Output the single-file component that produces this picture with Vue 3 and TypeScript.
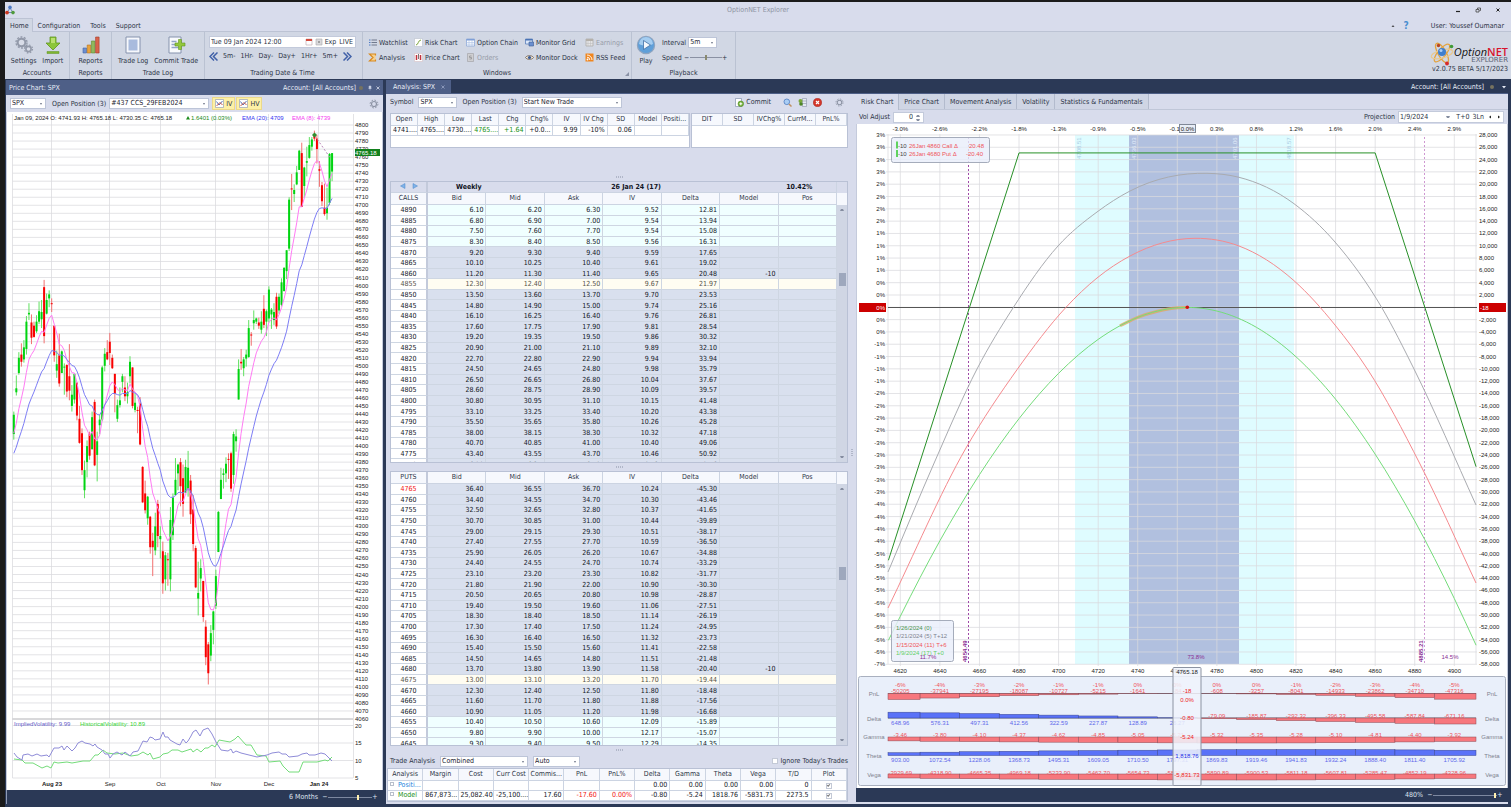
<script setup lang="ts">
import { ref } from 'vue'

type Quote = [number, string, string, string, string, string, string?]
type Pt = [number, number]

const riskTabs = ['Risk Chart', 'Price Chart', 'Movement Analysis', 'Volatility', 'Statistics & Fundamentals']
const activeTab = ref('Risk Chart')
const menus = ['Home', 'Configuration', 'Tools', 'Support']
const steps = ['5m-', '1Hr-', 'Day-', 'Day+', '1Hr+', '5m+']
const dateText = ref('Tue 09 Jan 2024 12:00')
const volAdjust = ref('0')
const projection = ref('1/9/2024')
const speed = ref(50)
const zoomLeft = ref(70)
const zoomRight = ref(98)
const ignoreTrades = ref(false)
const plotPosition = ref(true)
const plotModel = ref(true)

const quoteHead = ['Open', 'High', 'Low', 'Last', 'Chg', 'Chg%', 'IV', 'IV Chg', 'SD', 'Model', 'Positi...']
const quoteRow = ['4741....', '4765....', '4730....', '4765....', '+1.64', '+0.0...', '9.99', '-10%', '0.06', '', '']
const tradeHead = ['DIT', 'SD', 'IVChg%', 'CurrM...', 'PnL%']
const chainHead = ['Bid', 'Mid', 'Ask', 'IV', 'Delta', 'Model', 'Pos']

const calls: Quote[] = [
  [4890, '6.10', '6.20', '6.30', '9.52', '12.81'],
  [4885, '6.80', '6.90', '7.00', '9.54', '13.94'],
  [4880, '7.50', '7.60', '7.70', '9.54', '15.08'],
  [4875, '8.30', '8.40', '8.50', '9.56', '16.31'],
  [4870, '9.20', '9.30', '9.40', '9.59', '17.65'],
  [4865, '10.10', '10.25', '10.40', '9.61', '19.02'],
  [4860, '11.20', '11.30', '11.40', '9.65', '20.48', '-10'],
  [4855, '12.30', '12.40', '12.50', '9.67', '21.97'],
  [4850, '13.50', '13.60', '13.70', '9.70', '23.53'],
  [4845, '14.80', '14.90', '15.00', '9.74', '25.16'],
  [4840, '16.10', '16.25', '16.40', '9.76', '26.81'],
  [4835, '17.60', '17.75', '17.90', '9.81', '28.54'],
  [4830, '19.20', '19.35', '19.50', '9.86', '30.32'],
  [4825, '20.90', '21.00', '21.10', '9.89', '32.10'],
  [4820, '22.70', '22.80', '22.90', '9.94', '33.94'],
  [4815, '24.50', '24.65', '24.80', '9.98', '35.79'],
  [4810, '26.50', '26.65', '26.80', '10.04', '37.67'],
  [4805, '28.60', '28.75', '28.90', '10.09', '39.57'],
  [4800, '30.80', '30.95', '31.10', '10.15', '41.48'],
  [4795, '33.10', '33.25', '33.40', '10.20', '43.38'],
  [4790, '35.50', '35.65', '35.80', '10.26', '45.28'],
  [4785, '38.00', '38.15', '38.30', '10.32', '47.18'],
  [4780, '40.70', '40.85', '41.00', '10.40', '49.06'],
  [4775, '43.40', '43.55', '43.70', '10.46', '50.92'],
  [4770, '46.20', '46.35', '46.50', '10.53', '52.76'],
]
const puts: Quote[] = [
  [4765, '36.40', '36.55', '36.70', '10.24', '-45.30'],
  [4760, '34.40', '34.55', '34.70', '10.30', '-43.46'],
  [4755, '32.50', '32.65', '32.80', '10.37', '-41.65'],
  [4750, '30.70', '30.85', '31.00', '10.44', '-39.89'],
  [4745, '29.00', '29.15', '29.30', '10.51', '-38.17'],
  [4740, '27.40', '27.55', '27.70', '10.59', '-36.50'],
  [4735, '25.90', '26.05', '26.20', '10.67', '-34.88'],
  [4730, '24.40', '24.55', '24.70', '10.74', '-33.29'],
  [4725, '23.10', '23.20', '23.30', '10.82', '-31.77'],
  [4720, '21.80', '21.90', '22.00', '10.90', '-30.30'],
  [4715, '20.50', '20.65', '20.80', '10.98', '-28.87'],
  [4710, '19.40', '19.50', '19.60', '11.06', '-27.51'],
  [4705, '18.30', '18.40', '18.50', '11.14', '-26.19'],
  [4700, '17.30', '17.40', '17.50', '11.24', '-24.95'],
  [4695, '16.30', '16.40', '16.50', '11.32', '-23.73'],
  [4690, '15.40', '15.50', '15.60', '11.41', '-22.58'],
  [4685, '14.50', '14.65', '14.80', '11.51', '-21.48'],
  [4680, '13.70', '13.80', '13.90', '11.58', '-20.40', '-10'],
  [4675, '13.00', '13.10', '13.20', '11.70', '-19.44'],
  [4670, '12.30', '12.40', '12.50', '11.80', '-18.48'],
  [4665, '11.60', '11.70', '11.80', '11.88', '-17.56'],
  [4660, '10.90', '11.05', '11.20', '11.98', '-16.68'],
  [4655, '10.40', '10.50', '10.60', '12.09', '-15.89'],
  [4650, '9.80', '9.90', '10.00', '12.17', '-15.07'],
  [4645, '9.30', '9.40', '9.50', '12.29', '-14.35'],
]
const rowTone = (strike: number) =>
  strike === 4855 || strike === 4675 ? 'cream' : strike > 4870 || strike < 4660 ? 'cyan' : 'blue'

const analysisHead = ['Analysis', 'Margin', 'Cost', 'Curr Cost', 'Commis...', 'PnL', 'PnL%', 'Delta', 'Gamma', 'Theta', 'Vega', 'T/D', 'Plot']
const positionRow = ['', '', '', '', '', '', '0.00', '0.00', '0.00', '0.00', '0']
const modelRow = ['867,873...', '25,082.40', '-25,100....', '17.60', '-17.60', '0.00%', '-0.80', '-5.24', '1818.76', '-5831.73', '2273.5']

/* ---------- price chart ---------- */
const bars: number[][] = [
  [4415, 4443, 4408, 4439], [4467, 4488, 4463, 4472], [4491, 4517, 4489, 4510], [4514, 4528, 4499, 4505],
  [4508, 4532, 4504, 4523], [4521, 4562, 4514, 4555], [4564, 4578, 4557, 4566], [4554, 4564, 4527, 4535],
  [4550, 4555, 4535, 4536], [4543, 4563, 4541, 4555], [4555, 4580, 4552, 4568], [4558, 4582, 4547, 4567],
  [4598, 4607, 4528, 4537], [4565, 4590, 4564, 4582], [4584, 4594, 4573, 4589],
  [4578, 4584, 4567, 4577], [4550, 4550, 4505, 4513], [4494, 4519, 4485, 4502], [4513, 4540, 4474, 4478],
  [4491, 4519, 4491, 4518], [4498, 4503, 4464, 4499], [4501, 4502, 4461, 4468], [4487, 4527, 4457, 4469],
  [4450, 4476, 4443, 4464], [4458, 4490, 4453, 4490], [4479, 4479, 4432, 4438], [4434, 4450, 4403, 4404],
  [4416, 4422, 4364, 4370], [4345, 4382, 4335, 4370], [4380, 4407, 4361, 4400], [4415, 4418, 4383, 4388],
  [4396, 4443, 4396, 4436], [4455, 4458, 4375, 4376], [4389, 4418, 4356, 4406], [4426, 4439, 4415, 4433],
  [4433, 4500, 4431, 4498], [4500, 4522, 4493, 4515], [4517, 4532, 4507, 4508],
  [4530, 4541, 4501, 4516], [4510, 4514, 4496, 4497], [4490, 4490, 4442, 4465], [4434, 4458, 4430, 4451],
  [4451, 4473, 4448, 4457], [4480, 4490, 4467, 4487], [4473, 4487, 4456, 4462], [4462, 4479, 4453, 4467],
  [4487, 4512, 4478, 4505], [4498, 4498, 4447, 4450], [4445, 4466, 4442, 4454], [4445, 4449, 4416, 4444],
  [4453, 4461, 4401, 4402], [4374, 4375, 4329, 4330], [4341, 4357, 4316, 4320], [4310, 4338, 4302, 4337],
  [4312, 4313, 4266, 4274], [4282, 4292, 4238, 4274], [4270, 4317, 4264, 4300], [4328, 4333, 4274, 4288],
  [4284, 4300, 4260, 4288], [4269, 4281, 4216, 4229], [4234, 4268, 4220, 4264], [4259, 4267, 4226, 4258],
  [4234, 4324, 4219, 4308], [4289, 4341, 4283, 4336], [4339, 4385, 4339, 4358], [4366, 4378, 4345, 4377],
  [4380, 4385, 4325, 4350], [4360, 4377, 4312, 4328], [4342, 4383, 4342, 4374], [4345, 4394, 4337, 4373],
  [4357, 4364, 4303, 4315], [4321, 4339, 4269, 4278], [4273, 4276, 4223, 4224], [4210, 4256, 4189, 4217],
  [4235, 4259, 4219, 4248], [4232, 4232, 4181, 4187], [4175, 4183, 4127, 4137], [4153, 4156, 4103, 4117],
  [4139, 4177, 4132, 4167], [4171, 4195, 4153, 4194],
  [4201, 4246, 4197, 4238], [4268, 4319, 4268, 4318], [4334, 4373, 4334, 4358], [4364, 4372, 4347, 4366],
  [4366, 4386, 4355, 4378], [4384, 4391, 4359, 4383], [4391, 4393, 4343, 4347], [4364, 4418, 4353, 4415],
  [4406, 4421, 4393, 4412], [4458, 4508, 4458, 4496], [4505, 4521, 4495, 4503], [4497, 4511, 4487, 4508],
  [4509, 4520, 4499, 4514], [4511, 4557, 4510, 4547], [4539, 4542, 4525, 4538], [4553, 4569, 4545, 4557],
  [4555, 4560, 4552, 4559], [4554, 4560, 4546, 4550], [4545, 4568, 4540, 4555], [4571, 4588, 4547, 4551],
  [4555, 4570, 4537, 4568],
  [4559, 4599, 4554, 4595], [4564, 4572, 4546, 4570], [4557, 4578, 4551, 4567], [4586, 4591, 4546, 4549],
  [4569, 4590, 4565, 4586], [4576, 4609, 4574, 4604], [4593, 4623, 4593, 4622], [4618, 4644, 4608, 4644],
  [4646, 4710, 4643, 4707], [4721, 4739, 4694, 4720], [4714, 4726, 4704, 4719], [4726, 4749, 4725, 4741],
  [4744, 4769, 4744, 4768], [4765, 4778, 4698, 4698], [4724, 4748, 4709, 4747], [4753, 4773, 4736, 4755],
  [4759, 4785, 4758, 4775], [4773, 4785, 4768, 4782], [4787, 4793, 4780, 4783], [4783, 4788, 4752, 4770],
  [4745, 4755, 4723, 4743], [4725, 4729, 4699, 4705], [4697, 4727, 4687, 4689], [4690, 4722, 4682, 4697],
  [4703, 4765, 4700, 4764], [4742, 4765, 4730, 4765],
]
const dayX = (i: number) => 13.8 + i * 2.526
const priceY = (p: number) => 125 + (4800 - p) * 0.8027
const candles = bars.map(([o, h, l, c], i) => ({
  x: dayX(i),
  top: priceY(h),
  low: priceY(l),
  y: priceY(Math.max(o, c)),
  h: Math.max(1, priceY(Math.min(o, c)) - priceY(Math.max(o, c))),
  up: c >= o,
}))
const ema = (n: number, seed: number) => {
  let v = seed
  return bars
    .map((b, i) => {
      if (i > 0) v += (2 / (n + 1)) * (b[3] - v)
      return `${dayX(i).toFixed(1)},${priceY(v).toFixed(1)}`
    })
    .join(' ')
}
const ema20 = ema(20, 4391)
const ema8 = ema(8, 4416)
const priceTicks = Array.from({ length: 75 }, (_, i) => 4800 - i * 10)
const months = [
  { x: 52, t: 'Aug 23', b: true }, { x: 110, t: 'Sep' }, { x: 161, t: 'Oct' },
  { x: 216, t: 'Nov' }, { x: 269, t: 'Dec' }, { x: 319, t: 'Jan 24', b: true },
]
const volTicks = [20, 15, 10, 5]
const volY = (v: number) => 778 - (v - 5) * 3.5
const impliedVol =
  '14,753 17,757 22,760 23,755 28,754 32,756 37,754 41,756 47,755 49,757 54,748 59,748 62,746 64,750 67,746 72,751 75,748 78,743 82,741 85,743 90,744 93,746 95,744 97,747 102,750 105,754 108,754 110,758 113,754 117,752 122,755 125,752 130,756 133,752 138,751 143,741 147,742 150,737 153,738 155,740 160,739 163,732 165,737 168,737 170,740 177,744 180,745 183,739 186,743 188,741 191,736 193,732 196,730 200,736 203,730 208,728 212,734 216,742 221,750 228,751 231,749 233,753 236,751 241,753 257,757 267,755 272,753 279,752 282,754 286,754 289,757 298,756 302,754 307,753 309,755 315,755 321,753 325,754 332,761'
const histVol =
  '14,759 22,760 25,763 33,763 42,768 47,766 51,768 54,762 58,763 67,762 72,763 83,761 90,761 95,755 98,755 103,750 107,753 115,754 123,753 131,756 138,755 143,752 148,755 150,753 153,759 160,757 163,754 168,753 172,750 178,750 182,752 191,749 193,752 197,749 201,752 205,748 208,748 212,745 215,747 219,740 230,742 235,739 238,736 246,745 251,745 257,755 266,756 269,762 280,761 283,766 289,772 299,772 303,762 317,762 325,760 328,761 332,757'

/* ---------- risk chart ---------- */
const sx = (s: number) => 900.3 + (s - 4620) * 1.9786
const py = (v: number) => 307.3 - v * 0.006155
const pnlTicks = Array.from({ length: 44 }, (_, i) => 28000 - i * 2000)
const pct = (v: number) => {
  const r = Math.round((v / 867873) * 100)
  return `${r === 0 ? 0 : r}%`
}
const money = (v: number) => v.toLocaleString('en-US')
const strikes = Array.from({ length: 15 }, (_, i) => 4620 + i * 20)
const moves = ['-3.0%', '-2.6%', '-2.2%', '-1.8%', '-1.3%', '-0.9%', '-0.5%', '-0.1%', '0.3%', '0.8%', '1.2%', '1.6%', '2.0%', '2.4%', '2.9%']

/* Cubic Hermite curve through points of uneven spacing, tangents from the local parabola. */
const smooth = (p: Pt[]) => {
  const n = p.length
  const seg = p.slice(1).map((q, i) => (q[1] - p[i][1]) / (q[0] - p[i][0]))
  const m = p.map((_, i) => {
    if (i === 0) return seg[0]
    if (i === n - 1) return seg[n - 2]
    const a = p[i][0] - p[i - 1][0]
    const b = p[i + 1][0] - p[i][0]
    return (seg[i - 1] * b + seg[i] * a) / (a + b)
  })
  let d = `M${p[0][0]} ${p[0][1]}`
  for (let i = 0; i < n - 1; i++) {
    const t = (p[i + 1][0] - p[i][0]) / 3
    d += ` C${p[i][0] + t} ${p[i][1] + t * m[i]} ${p[i + 1][0] - t} ${p[i + 1][1] - t * m[i + 1]} ${p[i + 1][0]} ${p[i + 1][1]}`
  }
  return d
}
const todayPnl: Pt[] = [
  [4614, -54100], [4620, -50205], [4640, -37941], [4660, -27195], [4680, -18087], [4700, -10727], [4720, -5215],
  [4740, -1641], [4760, -84], [4780, -608], [4800, -3257], [4820, -8041], [4840, -14933],
  [4860, -23862], [4880, -34710], [4900, -47316], [4911, -54900],
]
const todayCurve = smooth(todayPnl.map(([s, v]): Pt => [sx(s), py(v)]))
const orangeCurve = smooth(([[4731, -3000], [4740, -1641], [4750, -650], [4760, -84], [4765, -18]] as Pt[]).map(([s, v]): Pt => [sx(s), py(v)]))
const redCurve = smooth([
  [888, 608], [966, 448], [1017, 369.7], [1066, 307.3], [1097, 278], [1130, 256], [1195, 238.300],
  [1239, 246], [1294, 280.7], [1335, 325], [1368, 370], [1420, 464], [1476, 583],
])
const grayCurve = smooth([
  [888, 572], [935, 461], [977, 369], [1013, 308], [1058, 246], [1097, 212], [1130, 191],
  [1207, 173.3], [1239, 177.3], [1294, 203.7], [1335, 242], [1382, 308], [1414, 369], [1476, 505],
])
const expiry = [[4614, -41100], [4680, 25082], [4860, 25082], [4911, -25900]].map(([s, v]) => `${sx(s)},${py(v)}`).join(' ')

const greekCols = [
  ['-6%', -50205, 648.96, -3.46, 903.0, -3929.69], ['-4%', -37941, 576.31, -3.8, 1072.54, -4318.9],
  ['-3%', -27195, 497.31, -4.1, 1228.06, -4665.35], ['-2%', -18087, 412.56, -4.37, 1368.73, -4969.18],
  ['-1%', -10727, 322.59, -4.62, 1495.31, -5233.9], ['-1%', -5215, 227.87, -4.85, 1609.05, -5462.7],
  ['0%', -1641, 128.89, -5.05, 1710.5, -5654.73], ['0%', -84, 26.27, -5.21, 1797.31, -5802.84],
  ['0%', -608, -79.09, -5.32, 1869.83, -5890.89], ['0%', -3257, -185.87, -5.35, 1919.46, -5900.53],
  ['-1%', -8041, -292.32, -5.28, 1941.83, -5811.18], ['-2%', -14933, -396.33, -5.1, 1932.24, -5607.81],
  ['-3%', -23862, -495.58, -4.81, 1888.4, -5285.47], ['-4%', -34710, -587.84, -4.4, 1811.4, -4852.19],
  ['-5%', -47316, -671.16, -3.92, 1705.92, -4328.96],
] as [string, number, number, number, number, number][]
const greekRows = [
  { name: 'PnL', y: 694, base: 693.5, max: 50205, textY: 691, digits: 0 },
  { name: 'Delta', y: 719, base: 718, max: 671, textY: 716, digits: 2 },
  { name: 'Gamma', y: 737, base: 737, max: 5.35, textY: 735, digits: 2 },
  { name: 'Theta', y: 756, base: 755.5, max: 1941, textY: 0, digits: 2 },
  { name: 'Vega', y: 775, base: 774, max: 5900, textY: 773, digits: 2 },
]
const cells = greekCols.flatMap((col, i) => {
  const left = i === 0 ? 888 : sx(4610 + i * 20)
  const right = i === 14 ? 1476 : sx(4630 + i * 20)
  return greekRows.map((row, r) => {
    const v = col[r + 1] as number
    const h = (Math.abs(v) / row.max) * 6
    return {
      key: `${i}-${r}`,
      x: left,
      w: right - left,
      y: v < 0 ? row.base : row.base - h,
      h,
      neg: v < 0,
      cx: sx(4620 + i * 20),
      ty: v < 0 ? row.textY + 2 : row.base + 6.5,
      text: v.toFixed(row.digits),
    }
  })
})
const cursorVals = [
  { y: 693, t: '-18' }, { y: 702, t: '0.0%' }, { y: 720, t: '-0.80' }, { y: 739, t: '-5.24' },
  { y: 758, t: '1,818.76', blue: true }, { y: 777, t: '-5,831.73' },
]
const sdBands = [
  { x: 1081, t: '4708.51', c: 'sd-out' }, { x: 1136, t: '4736.03', c: 'sd-in' },
  { x: 1237, t: '4791.06', c: 'sd-in' }, { x: 1291, t: '4818.57', c: 'sd-out' },
]
</script>

<template>
  <div class="app">
    <header class="titlebar">
      <svg class="app-icon" viewBox="0 0 10 10" aria-hidden="true">
        <path d="M5 3 2 7.5h6z" fill="none" stroke="#6a86b8" stroke-width="1" />
        <circle cx="5" cy="2.4" r="1.8" fill="#4a78c4" />
        <circle cx="2" cy="7.6" r="1.9" fill="#c8371f" />
        <circle cx="8" cy="7.6" r="1.8" fill="#4f9a3c" />
      </svg>
      <h1>OptionNET Explorer</h1>
      <div class="win-buttons">
        <button aria-label="Minimize"><svg viewBox="0 0 8 8"><path d="M2 5.5h4" stroke="#222" stroke-width="1.2" /></svg></button>
        <button aria-label="Restore"><svg viewBox="0 0 8 8"><path d="M3.500 3V2h3v2.500h-1M2 3.500h3v2.500H2z" fill="none" stroke="#444" stroke-width=".8" /></svg></button>
        <button aria-label="Close window"><svg viewBox="0 0 8 8"><path d="M2.500 2.500l3 3M5.500 2.500l-3 3" stroke="#222" /></svg></button>
      </div>
    </header>

    <nav class="menubar">
      <button v-for="m in menus" :key="m" :class="{ current: m === 'Home' }">{{ m }}</button>
      <div class="menu-right">
        <button class="plain" aria-label="Collapse ribbon"><svg viewBox="0 0 8 8"><path d="M2 5 4 3l2 2z" fill="#222" /></svg></button>
        <button class="plain help" aria-label="Help">?</button>
        <span>User: Youssef Oumanar</span>
      </div>
    </nav>

    <section class="ribbon">
      <div class="group g-accounts">
        <div class="big-row">
          <button class="big">
            <svg viewBox="0 0 20 20">
              <g fill="none" stroke="#9299a9">
                <circle cx="7.500" cy="7.500" r="3.800" stroke-width="2" fill="#d9dde8" />
                <circle cx="7.500" cy="7.500" r="5.500" stroke-width="1.400" stroke-dasharray="2 1.450" />
                <circle cx="14.500" cy="14" r="2.600" stroke-width="1.600" fill="#d9dde8" />
                <circle cx="14.500" cy="14" r="4" stroke-width="1.200" stroke-dasharray="1.600 1.540" />
              </g>
            </svg>
            Settings
          </button>
          <button class="big">
            <svg viewBox="0 0 20 20">
              <path d="M7 2h6v6h4l-7 7-7-7h4z" fill="#8cc63a" stroke="#5f9420" stroke-width=".8" />
              <path d="M8 3h4v5H8z" fill="#b9e070" />
              <path d="M4 16.500h12v2H4z" fill="#7fb52f" stroke="#5f9420" stroke-width=".5" />
            </svg>
            Import
          </button>
        </div>
        <h2>Accounts</h2>
      </div>
      <div class="group g-reports">
        <div class="big-row">
          <button class="big">
            <svg viewBox="0 0 20 20" stroke-width=".6">
              <path d="M2 13h3.500v5H2z" fill="#6d8fd0" stroke="#4565a5" />
              <path d="M6.200 10h3.500v8H6.200z" fill="#e9a23b" stroke="#b5721b" />
              <path d="M10.400 6h3.500v12h-3.500z" fill="#8fb85c" stroke="#5f8a30" />
              <path d="M14.600 2h3.500v16h-3.500z" fill="#d9634c" stroke="#a33b27" />
            </svg>
            Reports
          </button>
        </div>
        <h2>Reports</h2>
      </div>
      <div class="group g-tradelog">
        <div class="big-row">
          <button class="big">
            <svg viewBox="0 0 20 20">
              <path d="M3 2h14v16H3z" fill="#f6f8fc" stroke="#8592ad" />
              <path d="M5.500 4.500h9v11h-9z" fill="#a9bbdd" />
            </svg>
            Trade Log
          </button>
          <button class="big">
            <svg viewBox="0 0 20 20">
              <path d="M3 2h12v16H3z" fill="#f8fafd" stroke="#8592ad" />
              <path d="M5.500 6.500h5M5.500 9.500h4M5.500 12.500h7" stroke="#93a5c8" stroke-width="1.500" />
              <path d="M12.500 4.500h3V8H19v3h-3.500v3.500h-3V11H9V8h3.500z" fill="#93c83d" stroke="#5f9420" stroke-width=".6" />
            </svg>
            Commit Trade
          </button>
        </div>
        <h2>Trade Log</h2>
      </div>
      <div class="group g-date">
        <div class="date-box">
          <input v-model="dateText" aria-label="Trading date and time" />
          <svg viewBox="0 0 8 8"><path d="M1 1h6v6H1z" fill="#fff" stroke="#b9a3a8" stroke-width=".6" /><path d="M1 1h6v2H1z" fill="#d24b3e" /></svg>
          <svg viewBox="0 0 8 8"><path d="M1 1h6v6H1z" fill="#d9d9dc" stroke="#a9a9ad" stroke-width=".6" /><path d="M3 3l2 2M5 3 3 5" stroke="#888" stroke-width=".7" /></svg>
          <button>Exp</button>
          <button>LIVE</button>
        </div>
        <div class="step-row">
          <button aria-label="Back"><svg viewBox="0 0 9 9"><path d="M5 .5 1 4.500l4 4M8.500.5l-4 4 4 4" fill="none" stroke="#4060a8" stroke-width="1.500" /></svg></button>
          <button v-for="s in steps" :key="s">{{ s }}</button>
          <button aria-label="Forward"><svg viewBox="0 0 9 9"><path d="M.5.5l4 4-4 4M4 .5l4 4-4 4" fill="none" stroke="#4060a8" stroke-width="1.500" /></svg></button>
        </div>
        <h2>Trading Date &amp; Time</h2>
      </div>
      <div class="group g-windows">
        <div class="win-grid">
          <button><svg viewBox="0 0 9 9"><path d="M1 2h1.500M1 4.500h1.500M1 7h1.500" stroke="#4a78c4" /><path d="M3.500 2H9M3.500 4.500H9M3.500 7H9" stroke="#70798c" /></svg>Watchlist</button>
          <button><svg viewBox="0 0 9 9"><path d="M.5.5h8v8h-8z" fill="#fff" stroke="#b8bfcc" stroke-width=".6" /><path d="M2 7c2.500 0 2-5 5-5" fill="none" stroke="#7aa33a" /></svg>Risk Chart</button>
          <button><svg viewBox="0 0 9 9"><path d="M.5 1h8v7h-8z" fill="#fff" stroke="#7f9fd6" stroke-width=".7" /><path d="M.5 1h8v1.500h-8z" fill="#7f9fd6" /><path d="M3 2v6M6 2v6M.5 4.500h8M.5 6.200h8" stroke="#a9bfe4" stroke-width=".6" /></svg>Option Chain</button>
          <button><svg viewBox="0 0 9 9"><path d="M.5 1h7v5h-7z" fill="#dce8fa" stroke="#4a73b5" stroke-width=".7" /><path d="M.5 1h7v1.500h-7z" fill="#4a73b5" /><path d="M4 4h4.500v4H4z" fill="#6a8fd0" stroke="#3c5a90" stroke-width=".6" /></svg>Monitor Grid</button>
          <button disabled><svg viewBox="0 0 9 9"><path d="M1 1h7v7H1z" fill="#e4e4e6" stroke="#aaa6a0" stroke-width=".7" /><path d="M1 1h7v2H1z" fill="#b5b1ab" /><path d="M3 3v5M5.500 3v5M1 5.500h7" stroke="#bbb" stroke-width=".5" /></svg>Earnings</button>
          <button><svg viewBox="0 0 9 9"><path d="M7.500 2.500V1h-6L5 4.500 1.500 8h6V6.500" fill="#f7d08a" stroke="#d98a1e" stroke-width="1.200" /></svg>Analysis</button>
          <button><svg viewBox="0 0 9 9"><path d="M.5.5h8v8h-8z" fill="#fff" stroke="#d7bfc4" stroke-width=".6" /><path d="M2.500 2v5M6.500 2v5" stroke="#c2323c" stroke-width="1.500" /><path d="M4.500 1v5" stroke="#555" stroke-width=".8" /></svg>Price Chart</button>
          <button disabled><svg viewBox="0 0 9 9"><path d="M1.500.5h6v8h-6z" fill="#cfcfd2" stroke="#a5a5a9" stroke-width=".7" /><path d="M5.500 3h-2v1.500h2V6h-2" fill="none" stroke="#8a8a8e" stroke-width=".7" /></svg>Orders</button>
          <button><svg viewBox="0 0 9 9"><path d="M.5 4.500C2 2 7 2 8.500 4.500 7 7 2 7 .5 4.500z" fill="#f4ead8" stroke="#6d5a48" stroke-width=".8" /><circle cx="4.500" cy="4.500" r="1.600" fill="#3a5a94" /></svg>Monitor Dock</button>
          <button><svg viewBox="0 0 9 9"><path d="M.5.5h8v8h-8z" fill="#f0861f" /><circle cx="2.500" cy="6.500" r=".9" fill="#fff" /><path d="M2 4.200a2.800 2.800 0 0 1 2.800 2.800M2 2a5 5 0 0 1 5 5" fill="none" stroke="#fff" stroke-width=".9" /></svg>RSS Feed</button>
        </div>
        <h2>Windows</h2>
        <span class="launcher"></span>
      </div>
      <div class="group g-playback">
        <div class="play-row">
          <button class="big">
            <svg viewBox="0 0 20 20">
              <circle cx="10" cy="10" r="8.600" fill="#5f9fd9" stroke="#8fa4bf" stroke-width="1.200" />
              <path d="M3 9a7 7 0 0 1 14 0c-4 2-10 2-14 0z" fill="#a5cdf0" />
              <path d="M7.500 5.500v9l7-4.500z" fill="#f4f8fd" stroke="#3f6ea5" stroke-width=".8" />
            </svg>
            Play
          </button>
          <div class="play-controls">
            <div>
              <label for="interval">Interval</label>
              <span class="combo w-28"><select id="interval"><option>5m</option></select></span>
            </div>
            <div>
              <label for="speed">Speed</label>
              <span class="slider"><i>−</i><input id="speed" v-model="speed" type="range" /><i>+</i></span>
            </div>
          </div>
        </div>
        <h2>Playback</h2>
      </div>
      <div class="brand">
        <div class="brand-row">
          <svg viewBox="0 0 24 26" aria-hidden="true">
            <g fill="none" stroke="#e3a33f" stroke-width="1.300">
              <ellipse cx="12" cy="12" rx="11" ry="4" transform="rotate(60 12 12)" />
              <ellipse cx="12" cy="12" rx="11" ry="4" transform="rotate(-50 12 12)" />
              <ellipse cx="12" cy="13" rx="11" ry="4" transform="rotate(-15 12 13)" stroke="#e9c98f" />
            </g>
            <circle cx="12" cy="11" r="4" fill="#3f7fcf" />
            <circle cx="11" cy="9.500" r="1.500" fill="#a9cdf5" />
            <circle cx="8.500" cy="4.500" r="1.700" fill="#b8441f" />
            <circle cx="21.500" cy="5.500" r="1.800" fill="#3f9a35" />
            <circle cx="17" cy="22.500" r="1.900" fill="#d62a2a" />
          </svg>
          <div class="brand-name"><span><em>Option</em><b>NET</b></span><small>EXPLORER</small></div>
        </div>
        <p>v2.0.75 BETA 5/17/2023</p>
      </div>
    </section>

    <main class="dock">
      <section class="panel price-panel">
        <header class="caption">
          <h2>Price Chart: SPX</h2>
          <span>Account: [All Accounts]</span>
          <span class="dot"></span>
          <button class="plain" aria-label="Pin"><svg viewBox="0 0 6 6"><path d="M2 1h2v2.500H2zM1.500 3.500h3M3 3.500V5.500" fill="#c5cde0" stroke="#c5cde0" stroke-width=".5" /></svg></button>
          <button class="plain" aria-label="Close panel"><svg viewBox="0 0 6 6"><path d="M1.500 1.500l3 3M4.500 1.500l-3 3" stroke="#d5dbea" stroke-width=".8" /></svg></button>
        </header>
        <div class="toolbar">
          <span class="combo w-36"><select aria-label="Chart symbol"><option>SPX</option></select></span>
          <label for="left-position">Open Position (3)</label>
          <span class="combo w-100"><select id="left-position"><option>#437 CCS_29FEB2024</option></select></span>
          <div class="toggles">
            <button v-for="t in ['IV', 'HV']" :key="t">
              <svg viewBox="0 0 9 9"><path d="M.5.5h8v8h-8z" fill="#fff" stroke="#9aa2b5" stroke-width=".7" /><path d="M1.500 2.500 4 6l3.500-4" fill="none" stroke="#3f65b5" stroke-width=".9" /><path d="M1.500 7 5 3.500 7.500 6" fill="none" stroke="#c8452f" stroke-width=".9" /></svg>{{ t }}
            </button>
          </div>
          <button class="plain gear" aria-label="Chart settings"><svg viewBox="0 0 10 10"><circle cx="5" cy="5" r="2.500" fill="none" stroke="#8d94a5" stroke-width="1.200" /><circle cx="5" cy="5" r="3.900" fill="none" stroke="#8d94a5" stroke-width="1" stroke-dasharray="1.600 1.460" /></svg></button>
        </div>
        <svg class="chart" viewBox="7 112 375 678" role="img" aria-label="SPX daily price chart">
          <g class="grid">
            <path v-for="p in priceTicks" :key="p" :d="`M12.500 ${priceY(p)}H353`" />
            <path v-for="m in months" :key="m.t" :d="`M${m.x - 0.5} 114V778`" />
            <path v-for="v in volTicks" :key="v" :d="`M12.500 ${volY(v)}H353`" />
            <path d="M12.500 114V778M353.500 114V778" />
            <path d="M12.500 719H353" class="divider" />
          </g>
          <g v-for="(c, i) in candles" :key="i" :class="c.up ? 'up' : 'down'">
            <path :d="`M${c.x} ${c.top}V${c.low}`" />
            <rect :x="c.x - 1" :y="c.y" width="2" :height="c.h" />
          </g>
          <polyline :points="ema8" class="line magenta" />
          <polyline :points="ema20" class="line blue-line" />
          <path d="M315 136 331 159" class="hint" />
          <path d="M314.500 132.500l2.500 2.500-2.500 2.500-2.500-2.500z" fill="#2f8f2f" />
          <text x="14" y="120">Jan 09, 2024 O: 4741.93 H: 4765.18 L: 4730.35 C: 4765.18</text>
          <path d="M186 119.500l2-3.500 2 3.500z" fill="#1a8a1a" />
          <text x="191" y="120" class="t-green">1.6401 (0.03%)</text>
          <text x="242" y="120" class="t-blue">EMA (20): 4709</text>
          <text x="292" y="120" class="t-magenta">EMA (8): 4739</text>
          <text v-for="p in priceTicks" :key="p" x="355" :y="priceY(p) + 2">{{ p }}</text>
          <rect x="355" y="149" width="25" height="7" fill="#12801d" />
          <text x="355" y="155" class="t-white">4765.18</text>
          <text v-for="v in volTicks" :key="v" x="355" :y="volY(v) + 2">{{ v }}</text>
          <polyline :points="histVol" class="line green-line" />
          <polyline :points="impliedVol" class="line violet" />
          <text x="14" y="726" class="t-violet">ImpliedVolatility: 9.99</text>
          <text x="80" y="726" class="t-lime">HistoricalVolatility: 10.89</text>
          <text v-for="m in months" :key="m.t" :x="m.x" y="786" text-anchor="middle" :class="{ bold: m.b }">{{ m.t }}</text>
        </svg>
        <footer class="footbar">
          <label for="zoom-left">6 Months</label>
          <span class="slider light wide"><i>−</i><input id="zoom-left" v-model="zoomLeft" type="range" /><i>+</i></span>
        </footer>
      </section>

      <section class="panel doc">
        <header class="doc-tabs">
          <h2>Analysis: SPX <button class="plain" aria-label="Close tab"><svg viewBox="0 0 6 6"><path d="M1.500 1.500l3 3M4.500 1.500l-3 3" stroke="#98a5c5" stroke-width=".8" /></svg></button></h2>
          <span class="account">Account: [All Accounts]</span>
          <span class="dot"></span>
          <button class="plain" aria-label="Documents"><svg viewBox="0 0 6 6"><path d="M1 2h4L3 4.500z" fill="#e5e9f5" /></svg></button>
        </header>
        <div class="doc-body">
          <div class="analysis">
            <div class="toolbar2">
              <label for="symbol">Symbol</label>
              <span class="combo w-38"><select id="symbol"><option>SPX</option></select></span>
              <label for="position">Open Position (3)</label>
              <span class="combo w-100"><select id="position"><option>Start New Trade</option></select></span>
              <div class="actions">
                <button class="plain commit"><svg viewBox="0 0 9 9"><path d="M.5.5h6v8h-6z" fill="#fff" stroke="#8592ad" stroke-width=".7" /><circle cx="5.800" cy="5.800" r="2.800" fill="#6fae34" stroke="#4a8520" stroke-width=".5" /><path d="M4.300 5.800h3M5.800 4.300v3" stroke="#fff" /></svg>Commit</button>
                <button class="plain" aria-label="Search"><svg viewBox="0 0 9 9"><circle cx="3.800" cy="3.800" r="2.800" fill="#a9cdf5" stroke="#5a86c4" stroke-width=".9" /><path d="M6 6l2.500 2.500" stroke="#c09060" stroke-width="1.500" /></svg></button>
                <button class="plain" aria-label="Show in chain"><svg viewBox="0 0 9 9"><path d="M4.500.5h4v8h-4z" fill="#e5e9f2" stroke="#8a93a8" stroke-width=".6" /><path d="M4.500 3h4M4.500 5.500h4" stroke="#8a93a8" stroke-width=".6" /><circle cx="2.500" cy="3" r="2" fill="#79a83a" /><circle cx="3" cy="6" r="1.800" fill="#4d8527" /></svg></button>
                <button class="plain" aria-label="Discard trade"><svg viewBox="0 0 9 9"><circle cx="4.500" cy="4.500" r="4.300" fill="#d3372b" stroke="#99190f" stroke-width=".4" /><path d="M3 3l3 3M6 3 3 6" stroke="#fff" stroke-width="1.200" /></svg></button>
                <button class="plain last" aria-label="Analysis settings"><svg viewBox="0 0 10 10"><circle cx="5" cy="5" r="2.500" fill="none" stroke="#8d94a5" stroke-width="1.200" /><circle cx="5" cy="5" r="3.900" fill="none" stroke="#8d94a5" stroke-width="1" stroke-dasharray="1.600 1.460" /></svg></button>
              </div>
            </div>

            <div class="quotes">
              <div class="sheet">
                <table>
                  <thead><tr><th v-for="h in quoteHead" :key="h">{{ h }}</th></tr></thead>
                  <tbody><tr><td v-for="(q, i) in quoteRow" :key="i" :class="{ gain: i === 3 || i === 4 }">{{ q }}</td></tr></tbody>
                </table>
              </div>
              <div class="sheet">
                <table><thead><tr><th v-for="h in tradeHead" :key="h">{{ h }}</th></tr></thead></table>
              </div>
            </div>
            <div class="splitter tall"><i></i></div>

            <div class="chain calls">
              <table>
                <colgroup><col class="c-strike" /><col v-for="h in chainHead" :key="h" /></colgroup>
                <thead>
                  <tr class="expiry-row">
                    <th class="strike">
                      <button class="plain" aria-label="Previous expiration"><svg viewBox="0 0 6 6"><path d="M5 .5v5L.5 3z" fill="#7fb2e8" stroke="#4a86c8" stroke-width=".5" /></svg></button>
                      <button class="plain" aria-label="Next expiration"><svg viewBox="0 0 6 6"><path d="M1 .5v5L5.500 3z" fill="#7fb2e8" stroke="#4a86c8" stroke-width=".5" /></svg></button>
                    </th>
                    <th colspan="7"><div class="expiry"><span>Weekly</span><span>26 Jan 24 (17)</span><span>10.42%</span></div></th>
                  </tr>
                  <tr><th class="strike">CALLS</th><th v-for="h in chainHead" :key="h">{{ h }}</th></tr>
                </thead>
                <tbody>
                  <tr v-for="r in calls" :key="r[0]" :class="rowTone(r[0])">
                    <td class="strike">{{ r[0] }}</td>
                    <td v-for="n in 7" :key="n">{{ r[n] }}</td>
                  </tr>
                </tbody>
              </table>
              <div class="rail"><span class="rail-top"></span><i class="arrow-up"></i><span class="thumb"></span><i class="arrow-down"></i></div>
            </div>
            <div class="splitter"><i></i></div>
            <div class="chain puts">
              <table>
                <colgroup><col class="c-strike" /><col v-for="h in chainHead" :key="h" /></colgroup>
                <thead><tr><th class="strike">PUTS</th><th v-for="h in chainHead" :key="h">{{ h }}</th></tr></thead>
                <tbody>
                  <tr v-for="r in puts" :key="r[0]" :class="rowTone(r[0])">
                    <td class="strike" :class="{ loss: r[0] === 4765 }">{{ r[0] }}</td>
                    <td v-for="n in 7" :key="n">{{ r[n] }}</td>
                  </tr>
                </tbody>
              </table>
              <div class="rail"><span class="rail-top"></span><i class="arrow-up"></i><span class="thumb"></span><i class="arrow-down"></i></div>
            </div>
            <div class="splitter"><i></i></div>

            <div class="toolbar3">
              <label for="combined">Trade Analysis</label>
              <span class="combo w-88"><select id="combined"><option>Combined</option></select></span>
              <span class="combo w-47"><select aria-label="Scaling"><option>Auto</option></select></span>
              <label class="ignore"><input v-model="ignoreTrades" type="checkbox" />Ignore Today's Trades</label>
            </div>
            <div class="sheet trade">
              <table>
                <thead><tr><th v-for="h in analysisHead" :key="h">{{ h }}</th></tr></thead>
                <tbody>
                  <tr>
                    <td class="name sky"><i class="expander"></i>Positi...</td>
                    <td v-for="(v, i) in positionRow" :key="i">{{ v }}</td>
                    <td class="center"><input v-model="plotPosition" type="checkbox" aria-label="Plot position" /></td>
                  </tr>
                  <tr>
                    <td class="name gain"><i class="expander"></i>Model</td>
                    <td v-for="(v, i) in modelRow" :key="i" :class="{ loss: i === 4 || i === 5 }">{{ v }}</td>
                    <td class="center"><input v-model="plotModel" type="checkbox" aria-label="Plot model" /></td>
                  </tr>
                </tbody>
              </table>
            </div>
          </div>

          <div class="risk">
            <div class="risk-tabs" role="tablist">
              <button v-for="t in riskTabs" :key="t" role="tab" :aria-selected="t === activeTab" :class="{ current: t === activeTab }" @click="activeTab = t">{{ t }}</button>
            </div>
            <div class="risk-controls">
              <label for="vol">Vol Adjust</label>
              <span class="spin"><input id="vol" v-model="volAdjust" /><i class="arrow-up"></i><i class="arrow-down"></i></span>
              <div class="projection">
                <label for="projection">Projection</label>
                <span class="proj-box">
                  <input id="projection" v-model="projection" />
                  <i class="arrow-down"></i>
                  <button class="plain">T+0</button>
                  <button class="plain">3Ln</button>
                  <button class="plain" aria-label="Previous day"><svg viewBox="0 0 6 6"><path d="M4 1.500v3L2 3z" fill="#222" /></svg></button>
                  <button class="plain" aria-label="Next day"><svg viewBox="0 0 6 6"><path d="M2 1.500v3L4 3z" fill="#222" /></svg></button>
                </span>
              </div>
            </div>
            <svg class="chart" viewBox="857 124 650 664" role="img" aria-label="Risk chart">
              <rect x="1075" y="135" width="219" height="529" fill="#dffcff" />
              <rect x="1129" y="135" width="110" height="529" fill="#b1c0df" />
              <g class="grid">
                <path v-for="v in pnlTicks" :key="v" :d="`M886 ${py(v)}H1477`" />
                <path v-for="s in strikes" :key="s" :d="`M${sx(s)} 134V666`" />
                <path d="M888 134V664M1476 134V664" />
              </g>
              <text v-for="(m, i) in moves" :key="i" :x="sx(4620 + i * 20)" y="131" text-anchor="middle">{{ m }}</text>
              <rect x="1179.500" y="124.500" width="16" height="8" class="tag" />
              <text x="1187.500" y="131" text-anchor="middle">0.0%</text>
              <text v-for="v in pnlTicks" :key="v" x="885" :y="py(v) + 2" text-anchor="end">{{ pct(v) }}</text>
              <template v-for="v in pnlTicks" :key="v">
                <text v-if="v !== 0" x="1479" :y="py(v) + 2">{{ money(v) }}</text>
              </template>
              <g v-for="b in sdBands" :key="b.t" :transform="`rotate(-90 ${b.x} 159)`">
                <text :x="b.x" y="159" :class="b.c">{{ b.t }}</text>
              </g>
              <path d="M888 307.500H1477" class="zero" />
              <path d="M968.500 137V664" class="breakeven" />
              <path d="M1424.500 137V664" class="breakeven faint" />
              <path :d="grayCurve" class="line gray-line" />
              <path :d="redCurve" class="line red-line" />
              <path :d="orangeCurve" class="glow" />
              <path :d="todayCurve" class="line green-line" />
              <polyline :points="expiry" class="line expiry-line" />
              <circle cx="1187.300" cy="307.300" r="1.800" fill="#d00f0f" />
              <rect x="859" y="303" width="27" height="9" fill="#cc0000" />
              <text x="885" y="309.500" text-anchor="end" class="t-white">0%</text>
              <rect x="1479" y="303" width="27" height="9" fill="#cc0000" />
              <text x="1480" y="309.500" class="t-white">-18</text>
              <rect x="891.500" y="137.500" width="98" height="25" rx="2" class="legend" />
              <path d="M897 141.500v7M897 150v7" stroke="#5fd35f" stroke-width="2" />
              <g>
                <text x="898" y="148" class="t-dark">-10</text>
                <text x="909" y="148" class="t-red">26Jan 4860 Call Δ</text>
                <text x="969" y="148" class="t-red">20.48</text>
                <text x="898" y="156" class="t-dark">-10</text>
                <text x="909" y="156" class="t-red">26Jan 4680 Put Δ</text>
                <text x="966" y="156" class="t-red">-20.40</text>
              </g>
              <rect x="891.500" y="620.500" width="62" height="41" rx="2" class="legend" />
              <text x="896" y="630" class="t-moss">1/26/2024 (0)</text>
              <text x="896" y="638" class="t-gray">1/21/2024 (5) T+12</text>
              <text x="896" y="647" class="t-red">1/15/2024 (11) T+6</text>
              <text x="896" y="655" class="t-soft">1/9/2024 (17) T+0</text>
              <g class="purple" text-anchor="middle">
                <text x="928" y="659">11.7%</text>
                <text x="1196" y="659">73.8%</text>
                <text x="1450" y="659">14.5%</text>
              </g>
              <g transform="rotate(-90 967 662)"><text x="967" y="662" class="purple bold">4654.49</text></g>
              <g transform="rotate(-90 1423 662)"><text x="1423" y="662" class="purple bold">4885.21</text></g>
              <text v-for="s in strikes" :key="s" :x="sx(s)" y="673" text-anchor="middle">{{ s }}</text>

              <rect x="858.500" y="676.500" width="647" height="109" rx="2" class="greeks-box" />
              <path d="M888 693.500H1476M888 718H1476" stroke="#555b68" stroke-width=".8" />
              <rect v-for="c in cells" :key="c.key" :x="c.x" :y="c.y" :width="c.w" :height="c.h" :class="c.neg ? 'bar-neg' : 'bar-pos'" />
              <text v-for="(g, i) in greekCols" :key="i" :x="sx(4620 + i * 20)" y="687" text-anchor="middle" class="t-red">{{ g[0] }}</text>
              <text v-for="c in cells" :key="c.key" :x="c.cx" :y="c.ty" text-anchor="middle" :class="c.neg ? 't-red' : 't-indigo'">{{ c.text }}</text>
              <g v-for="r in greekRows" :key="r.name" class="t-gray" text-anchor="middle">
                <text x="874" :y="r.y + 2">{{ r.name }}</text>
                <text x="1492" :y="r.y + 2">{{ r.name }}</text>
              </g>
              <rect x="1173" y="667.500" width="28" height="118" rx="1" class="cursor" />
              <text x="1187" y="674" text-anchor="middle">4765.18</text>
              <text v-for="c in cursorVals" :key="c.t" x="1187" :y="c.y" text-anchor="middle" :class="c.blue ? 'c-blue' : 'c-red'">{{ c.t }}</text>
            </svg>
            <footer class="footbar">
              <label for="zoom-right">480%</label>
              <span class="slider light long"><i>−</i><input id="zoom-right" v-model="zoomRight" type="range" /><i>+</i></span>
            </footer>
          </div>
          <i class="v-grip"></i>
        </div>
      </section>
    </main>
  </div>
</template>

<style>
html,
body {
  margin: 0;
  background: #1b1b1b;
}
</style>

<style scoped>
.app {
  box-sizing: border-box;
  display: flex;
  flex-direction: column;
  height: 100vh;
  padding: 2px 0 0 5px;
  overflow: hidden;
  background: #1b1b1b;
  color: #2c3446;
  font: 7px/10px "DejaVu Sans Condensed", "Noto Sans", sans-serif;
}
.app *,
.app *::before,
.app *::after {
  box-sizing: border-box;
}
h1,
h2,
p {
  margin: 0;
  font: inherit;
}
button,
input,
select {
  margin: 0;
  padding: 0;
  border: 0;
  border-radius: 0;
  background: none;
  color: inherit;
  font: inherit;
  white-space: nowrap;
}
label,
span,
h2 {
  white-space: nowrap;
}
svg {
  display: block;
  flex: none;
}
i {
  font-style: normal;
}
input[type='checkbox'] {
  appearance: none;
  width: 6px;
  height: 6px;
  border: 1px solid #c3c9d6;
  background: #fff;
}
input[type='checkbox']:checked::after {
  content: '';
  display: block;
  width: 3px;
  height: 2px;
  border: solid #777;
  border-width: 0 0 1px 1px;
  transform: rotate(-45deg);
}

.titlebar {
  display: grid;
  grid-template-columns: 1fr auto 1fr;
  align-items: center;
  height: 16px;
  background: #d8dcec;
  color: #8f94a3;
}
.app-icon {
  width: 10px;
  height: 10px;
}
.win-buttons {
  display: flex;
  justify-content: flex-end;
  gap: 12px;
  padding-right: 9px;
}
.win-buttons svg {
  width: 8px;
  height: 8px;
}
.menubar {
  display: flex;
  height: 14px;
  background: #d8dcec;
  border-bottom: 1px solid #bcc3d4;
}
.menubar > button {
  padding: 2px 5px 0;
}
.menubar > .current {
  height: 14px;
  padding: 1px 3px 0 5px;
  background: #d1d7e4;
  border: 1px solid #bcc3d4;
  border-bottom: 0;
  border-left: 0;
}
.menu-right {
  display: flex;
  align-items: center;
  gap: 8px;
  margin-left: auto;
  padding: 2px 7px 0 0;
}
.menu-right span {
  padding-left: 14px;
}
.menu-right svg {
  width: 8px;
  height: 8px;
}
.help {
  color: #4a8fd0;
  font-size: 10px;
  font-weight: bold;
}

.ribbon {
  display: flex;
  height: 47px;
  background: #d1d7e4;
}
.group {
  position: relative;
  display: flex;
  flex: none;
  flex-direction: column;
  border-right: 1px solid #bac2d2;
}
.group h2 {
  margin-top: auto;
  padding-bottom: 1px;
  text-align: center;
}
.g-accounts {
  width: 65px;
}
.g-reports {
  width: 42px;
}
.g-tradelog {
  width: 93px;
}
.g-date {
  width: 158px;
  padding: 0 6px 0 4px;
}
.g-windows {
  width: 269px;
}
.g-playback {
  width: 104px;
}
.big-row {
  display: flex;
  justify-content: space-around;
  padding: 3px 3px 0;
}
.big {
  display: flex;
  flex-direction: column;
  align-items: center;
  gap: 1px;
}
.big svg {
  width: 20px;
  height: 20px;
}
.date-box {
  display: flex;
  align-items: center;
  gap: 2px;
  height: 12px;
  margin-top: 4px;
  padding: 0 2px 0 1px;
  background: #fff;
  border: 1px solid #c3cadb;
}
.date-box input {
  flex: 1;
  min-width: 0;
}
.date-box svg {
  width: 8px;
  height: 8px;
}
.date-box button:last-child {
  padding-left: 1px;
}
.step-row {
  display: flex;
  align-items: center;
  justify-content: space-between;
  height: 16px;
  padding-right: 4px;
}
.step-row svg {
  width: 9px;
  height: 9px;
}
.win-grid {
  display: grid;
  grid-template-columns: 46px 52px 59px 60px auto;
  grid-auto-rows: 15px;
  padding: 3px 0 0 5px;
}
.win-grid button {
  display: flex;
  align-items: center;
  gap: 2px;
}
.win-grid button:disabled {
  color: #989ca8;
}
.win-grid svg {
  width: 9px;
  height: 9px;
}
.launcher {
  position: absolute;
  right: 2px;
  bottom: 3px;
  border: 2px solid;
  border-color: transparent #8a92a5 #8a92a5 transparent;
}
.play-row {
  display: flex;
  gap: 6px;
  padding: 3px 0 0 4px;
}
.play-controls > div {
  display: flex;
  align-items: center;
  gap: 2px;
  height: 15px;
}
.slider {
  display: flex;
  align-items: center;
  width: 44px;
}
.slider input {
  appearance: none;
  flex: 1;
  min-width: 0;
  height: 7px;
  background: linear-gradient(#8a91a3, #8a91a3) center / 100% 1px no-repeat;
}
.slider input::-webkit-slider-thumb {
  appearance: none;
  width: 2px;
  height: 5px;
  background: #8a8a70;
}
.slider.light input {
  background-image: linear-gradient(#7d88a0, #7d88a0);
}
.slider.light input::-webkit-slider-thumb {
  background: #fff0b0;
}
.slider.wide {
  width: 56px;
}
.slider.long {
  width: 76px;
}
.slider i {
  flex: none;
  width: 6px;
  text-align: center;
}

.combo {
  position: relative;
  display: block;
  flex: none;
  height: 11px;
  background: #fff;
  border: 1px solid #bdc5d8;
}
.combo::after {
  content: '';
  position: absolute;
  top: 4px;
  right: 3px;
  border: 1px solid transparent;
  border-top: 2px solid #6b7386;
}
.combo select {
  display: block;
  appearance: none;
  width: 100%;
  height: 9px;
  padding-left: 1px;
  line-height: 9px;
  color: #1c2230;
}
.w-28 { width: 29px; }
.w-36 { width: 36px; }
.w-38 { width: 39px; }
.w-47 { width: 47px; }
.w-88 { width: 88px; }
.w-100 { width: 100px; }

.brand {
  margin-left: auto;
  padding: 9px 3px 0 0;
  text-align: right;
}
.brand-row {
  display: flex;
  justify-content: flex-end;
}
.brand-row svg {
  width: 24px;
  height: 26px;
}
.brand-name {
  display: flex;
  flex-direction: column;
  align-items: flex-end;
  font: 11px/11px "Open Sans", sans-serif;
  color: #111;
  padding-top: 5px;
}
.brand-name b {
  font-weight: 600;
  color: #d8142c;
}
.brand-name small {
  font: 7px/6px "DejaVu Sans", sans-serif;
  color: #5c6474;
}
.brand p {
  margin-top: -3px;
}

.dock {
  display: grid;
  grid-template-columns: 377fr 1122fr;
  gap: 3px;
  flex: 1;
  min-height: 0;
  padding: 1px 3px 3px 1px;
  background: #2b3956;
}
.panel {
  display: flex;
  flex-direction: column;
  min-width: 0;
  min-height: 0;
}
.plain {
  flex: none;
}
.plain svg {
  width: 6px;
  height: 6px;
}
.caption {
  display: flex;
  align-items: center;
  gap: 2px;
  height: 15px;
  padding: 0 2px 0 3px;
  background: #4e5f87;
  color: #e9edf7;
}
.caption h2 {
  flex: 1;
}
.dot {
  width: 4px;
  height: 4px;
  margin: 0 2px 0 1px;
  border-radius: 50%;
  background: #77735f;
}
.toolbar {
  display: flex;
  align-items: center;
  height: 17px;
  padding: 0 4px 0 4px;
  background: #d8dcec;
}
.toolbar label {
  margin: 0 3px 0 6px;
}
.toggles {
  display: flex;
  gap: 1px;
  margin-left: 3px;
}
.toggles button {
  display: flex;
  align-items: center;
  gap: 2px;
  height: 13px;
  padding: 0 2px;
  background: #fdf0a6;
  border: 1px solid #ecd98a;
}
.toggles svg {
  width: 9px;
  height: 9px;
}
.gear {
  margin-left: auto;
}
.gear svg,
.last svg {
  width: 10px;
  height: 10px;
}
.chart {
  flex: 1;
  width: 100%;
  min-height: 0;
  background: #fff;
  border: solid #c5cbdc;
  border-width: 0 1px;
  font: 6px "Liberation Sans", Arial, sans-serif;
}
.footbar {
  display: flex;
  align-items: center;
  justify-content: flex-end;
  gap: 4px;
  flex: none;
  height: 14px;
  padding-right: 5px;
  background: #2b3956;
  color: #dfe4f0;
}
.price-panel .footbar {
  border-left: 1px solid #8f9bb5;
}

.chart text {
  fill: #222;
}
.chart .bold {
  font-weight: bold;
}
.grid path {
  stroke: #d9dadd;
  stroke-opacity: .75;
  stroke-width: 1;
}
.grid .divider {
  stroke: #b0b0b4;
}
.up path {
  stroke: #5fe05f;
}
.up rect {
  fill: #00d411;
}
.down path {
  stroke: #f27070;
}
.down rect {
  fill: #f90000;
}
.line {
  fill: none;
  stroke-width: 1;
}
.magenta { stroke: #ff7cf4; }
.blue-line { stroke: #7d7df5; }
.violet { stroke: #8f8cd8; }
.green-line { stroke: #74dc7a; }
.gray-line { stroke: #a9abb0; }
.red-line { stroke: #f58a8e; }
.expiry-line { stroke: #279027; }
.hint {
  stroke: #b784b7;
  stroke-dasharray: 2 2;
}
.zero {
  stroke: #555;
}
.breakeven {
  stroke: #a04aa8;
  stroke-dasharray: 2 2;
}
.faint {
  stroke: #cf98d2;
}
.glow {
  fill: none;
  stroke: #e0a860;
  stroke-opacity: .8;
  stroke-width: 3;
}
.chart .t-white { fill: #fff; }
.chart .t-green { fill: #1a8a1a; }
.chart .t-blue { fill: #3434f0; }
.chart .t-magenta { fill: #f53af0; }
.chart .t-violet { fill: #5f5bc8; }
.chart .t-lime { fill: #35d435; }
.chart .t-red { fill: #f0545a; }
.chart .t-soft { fill: #5fcf66; }
.chart .t-moss { fill: #4a924e; }
.chart .t-dark { fill: #444; }
.chart .t-gray,
.chart .t-gray text { fill: #7d828e; }
.chart .t-indigo { fill: #6068ea; }
.chart .c-red { fill: #ee1c24; }
.chart .c-blue { fill: #2630e8; }
.chart .purple,
.chart .purple text { fill: #8a2f94; }
.chart .sd-out { fill: #a9cbe4; }
.chart .sd-in { fill: #e3eefb; }
.tag {
  fill: #e8edf7;
  stroke: #7f8796;
}
.legend {
  fill: #e9eefa;
  fill-opacity: .8;
  stroke: #a5acbb;
}
.greeks-box {
  fill: #e9effa;
  stroke: #a9b0bf;
}
.bar-neg {
  fill: #f7777d;
  stroke: #8a4a55;
  stroke-width: .5;
}
.bar-pos {
  fill: #5a72f8;
  stroke: #3a4690;
  stroke-width: .5;
}
.cursor {
  fill: #f0f3fb;
  fill-opacity: .85;
  stroke: #8c93a2;
}

.doc-tabs {
  display: flex;
  align-items: center;
  gap: 5px;
  height: 14px;
  padding-right: 1px;
  border-bottom: 1px solid #4e5f87;
  color: #e9edf7;
}
.doc-tabs h2 {
  display: flex;
  align-items: center;
  gap: 5px;
  height: 13px;
  padding: 0 5px 0 7px;
  background: #4e5f87;
}
.account {
  margin-left: auto;
}
.doc-body {
  position: relative;
  display: grid;
  grid-template-columns: 470fr 652fr;
  flex: 1;
  min-height: 0;
  background: #d8dcec;
}
.analysis {
  display: flex;
  flex-direction: column;
  min-width: 0;
  min-height: 0;
  padding: 0 8px 2px 4px;
}
.toolbar2 {
  display: flex;
  align-items: center;
  flex: none;
  gap: 5px;
  height: 16px;
}
.actions {
  display: flex;
  align-items: center;
  gap: 6px;
  margin-left: auto;
  padding-right: 4px;
}
.actions svg {
  width: 9px;
  height: 9px;
}
.commit {
  display: flex;
  align-items: center;
  gap: 2px;
  margin-right: 6px;
}
.last {
  margin-left: 7px;
}
.quotes {
  display: grid;
  grid-template-columns: 300fr 157fr;
  gap: 1px;
  flex: none;
  height: 35px;
  margin-top: 3px;
}
.sheet {
  min-width: 0;
  overflow: hidden;
  background: #fff;
  border: 1px solid #b9c1d5;
}
table {
  width: 100%;
  table-layout: fixed;
  border-collapse: separate;
  border-spacing: 0;
}
th,
td {
  height: 10px;
  padding: 0 2px;
  overflow: hidden;
  border: 0 solid #ccd4e2;
  border-width: 0 1px 1px 0;
  line-height: 9px;
  white-space: nowrap;
  font-weight: normal;
}
th {
  height: 12px;
  padding: 0;
  background: #f6f8fd;
  text-align: center;
}
td {
  color: #12161f;
  text-align: right;
}
td.gain { color: #169016; }
td.loss { color: #f21414; }
td.sky { color: #2384dd; }

.splitter {
  display: flex;
  align-items: center;
  justify-content: center;
  flex: none;
  height: 8px;
}
.splitter.tall {
  align-items: flex-end;
  height: 33px;
  padding-bottom: 3px;
}
.splitter i {
  width: 7px;
  height: 2px;
  background: repeating-linear-gradient(90deg, #b0b6c8 0 1px, transparent 1px 2px);
}
.v-grip {
  position: absolute;
  top: 50%;
  left: 465px;
  width: 2px;
  height: 7px;
  background: repeating-linear-gradient(#b0b6c8 0 1px, transparent 1px 2px);
}
.chain {
  display: flex;
  align-items: flex-start;
  min-height: 0;
  overflow: hidden;
  border: 1px solid #b9c1d5;
}
.calls {
  flex: 282 1 0;
}
.puts {
  flex: 275 1 0;
}
.chain table {
  flex: 1 1 0;
  width: 100%;
  min-width: 0;
}
.chain td {
  padding-top: 1px;
  border-color: #ced6e2;
  line-height: 8px;
}
.calls table {
  height: 288px;
}
.puts table {
  height: 277px;
}
.c-strike {
  width: 37px;
}
.chain .strike {
  padding-right: 0;
  padding-left: 0;
  border-right: 2px solid #c3cadb;
  text-align: center;
}
.chain td.strike {
  background: #fff;
}
.expiry-row th {
  height: 11px;
  background: #d8dcec;
}
.expiry-row .plain {
  margin: 0 3px;
}
.expiry {
  display: grid;
  grid-template-columns: 10fr 31fr 9fr;
  color: #12161f;
  font-weight: bold;
}
.cyan td { background: #f0ffff; }
.blue td { background: #d9e0ee; }
.cream td { background: #fffdf2; color: #555248; }
.rail {
  display: flex;
  flex-direction: column;
  align-items: center;
  align-self: stretch;
  flex: none;
  width: 10px;
  background: #d0d6e4;
}
.rail-top {
  width: 10px;
  height: 12px;
  background: #f6f8fd;
}
.calls .rail-top {
  height: 23px;
  border-top: 11px solid #d8dcec;
}
.arrow-up,
.arrow-down {
  flex: none;
  width: 4px;
  height: 2px;
  border: 1px solid transparent;
}
.arrow-up {
  border-top: 0;
  border-bottom: 2px solid #858da0;
}
.arrow-down {
  border-bottom: 0;
  border-top: 2px solid #858da0;
}
.rail .arrow-up {
  margin-top: 4px;
}
.rail .arrow-down {
  margin: auto 0 4px;
}
.thumb {
  width: 7px;
  height: 13px;
  margin-top: 62px;
  background: #9ea8bd;
}
.puts .thumb {
  margin-top: 77px;
}

.toolbar3 {
  display: flex;
  align-items: center;
  flex: none;
  gap: 5px;
  height: 14px;
}
.ignore {
  display: flex;
  align-items: center;
  gap: 2px;
  margin-left: auto;
}
.trade {
  flex: none;
  height: 34px;
  margin-left: -3px;
}
.trade td.name {
  text-align: left;
}
.trade td.center {
  text-align: center;
}
.trade td input {
  display: block;
  margin: 0 auto;
}
.expander {
  display: inline-block;
  width: 4px;
  height: 4px;
  margin-right: 4px;
  border: 1px solid #b9bfcb;
  vertical-align: 1px;
}

.risk {
  display: flex;
  flex-direction: column;
  min-width: 0;
  min-height: 0;
  padding-bottom: 2px;
}
.risk-tabs {
  display: flex;
  flex: none;
  height: 16px;
  border-bottom: 1px solid #c0c7d8;
}
.risk-tabs button {
  height: 15px;
  padding: 0 5px;
  background: #cfd5e4;
  border-right: 1px solid #b3bbcd;
}
.risk-tabs .current {
  height: 16px;
  background: #d8dcec;
}
.risk-controls {
  display: flex;
  align-items: center;
  flex: none;
  gap: 3px;
  height: 14px;
  padding: 0 4px 0 3px;
}
.spin {
  position: relative;
  display: flex;
  width: 31px;
  height: 11px;
  background: #fff;
  border: 1px solid #c3cadb;
}
.spin input {
  width: 19px;
  text-align: right;
}
.spin i {
  position: absolute;
  top: 2px;
  right: 3px;
}
.spin .arrow-down {
  top: 6px;
}
.projection {
  display: flex;
  align-items: center;
  gap: 3px;
  margin-left: auto;
}
.proj-box {
  display: flex;
  align-items: center;
  gap: 3px;
  width: 106px;
  height: 12px;
  padding: 0 1px;
  background: #fff;
  border: 1px solid #c3cadb;
}
.proj-box input {
  flex: 1;
  min-width: 0;
}
.proj-box .arrow-down {
  margin-right: 3px;
}
</style>
